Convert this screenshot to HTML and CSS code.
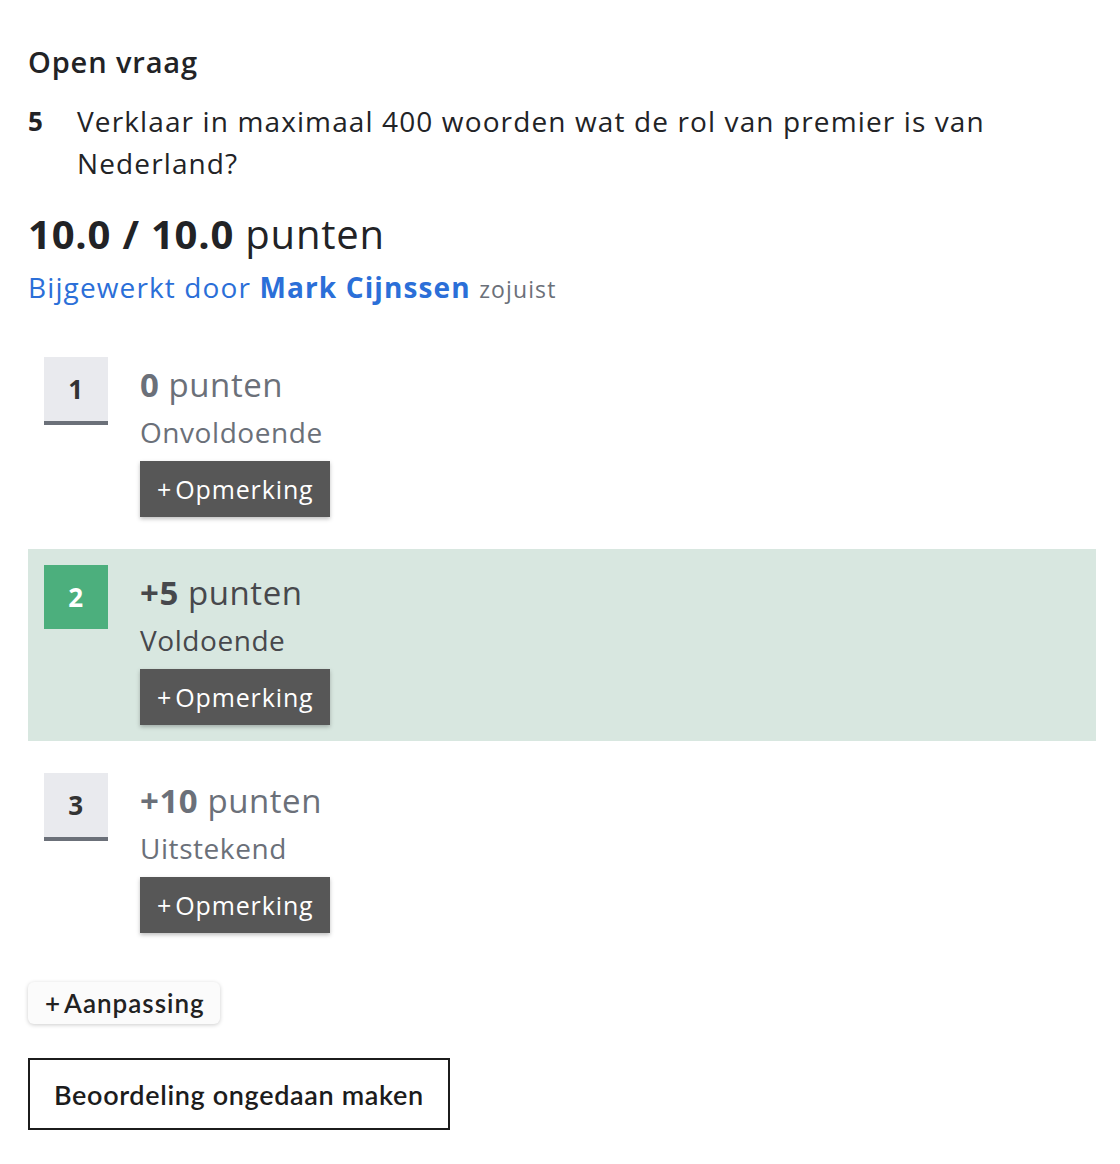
FILE: index.html
```html
<!DOCTYPE html>
<html lang="nl">
<head>
<meta charset="UTF-8">
<meta name="viewport" content="width=device-width, initial-scale=1.0">
<title>Open vraag</title>
<link rel="stylesheet" href="styles.css">
</head>
<body>
    <div class="wrapper">
        <h2 class="q-type">Open vraag</h2>
        <div class="question">
            <span class="q-num">5</span>
            <p class="q-text">Verklaar in maximaal 400 woorden wat de rol van premier is van Nederland?</p>
        </div>

        <div class="score"><b>10.0 / 10.0</b> punten</div>
        <div class="updated">Bijgewerkt door <b>Mark Cijnssen</b> <span class="when">zojuist</span></div>

        <!-- rubric -->
        <div class="rubric">
            <div class="level">
                <div class="key">1</div>
                <div class="level-body">
                    <div class="pts"><b>0</b> punten</div>
                    <div class="label">Onvoldoende</div>
                    <button class="btn-note">+<span>Opmerking</span></button>
                </div>
            </div>
            <div class="level selected">
                <div class="key">2</div>
                <div class="level-body">
                    <div class="pts"><b>+5</b> punten</div>
                    <div class="label">Voldoende</div>
                    <button class="btn-note">+<span>Opmerking</span></button>
                </div>
            </div>
            <div class="level">
                <div class="key">3</div>
                <div class="level-body">
                    <div class="pts"><b>+10</b> punten</div>
                    <div class="label">Uitstekend</div>
                    <button class="btn-note">+<span>Opmerking</span></button>
                </div>
            </div>
        </div>

        <button class="btn-adjust">+<span>Aanpassing</span></button>
        <div>
            <button class="btn-undo">Beoordeling ongedaan maken</button>
        </div>
    </div>
</body>
</html>
```

FILE: styles.css
```css
body{
    margin:0;
    background:#fff;
    font-family:"Open Sans", "DejaVu Sans", sans-serif;
    letter-spacing:0.035em;
    color:#222326;
}
.wrapper{
    padding:40px 24px 32px 28px;
}
.q-type{
    margin:0;
    font-size:29px;
    font-weight:600;
    line-height:44px;
    letter-spacing:0.03em;
}
.question{
    display:flex;
    margin-top:16px;
}
.q-num{
    width:49px;
    flex:none;
    font-size:26px;
    font-weight:700;
    line-height:42px;
}
.q-text{
    margin:0;
    max-width:960px;
    font-size:28px;
    line-height:42px;
    letter-spacing:0.04em;
}
.score{
    margin-top:24px;
    font-size:40px;
    line-height:52px;
    letter-spacing:0.02em;
}
.score b{
    font-weight:700;
}
.updated{
    margin-top:9px;
    font-size:28px;
    line-height:36px;
    color:#2b6fd8;
    letter-spacing:0.04em;
}
.updated b{
    font-weight:700;
}
.updated .when{
    font-size:23px;
    color:#6b7079;
}

/* rubric levels */
.rubric{
    margin-top:34px;
    display:flex;
    flex-direction:column;
    gap:16px;
}
.level{
    display:flex;
    gap:32px;
    padding:16px;
    color:#6b7079;
}
.level.selected{
    background:#d8e7e0;
    color:#47484c;
}
.key{
    width:64px;
    height:64px;
    flex:none;
    display:flex;
    align-items:center;
    justify-content:center;
    background:#e9eaee;
    border-bottom:4px solid #6b7079;
    color:#333;
    font-size:26px;
    font-weight:700;
}
.selected .key{
    background:#4caf7d;
    border-bottom:none;
    color:#fff;
}
.pts{
    font-size:33px;
    line-height:44px;
    margin-top:6px;
}
.pts b{
    font-weight:700;
}
.label{
    margin-top:5px;
    font-size:28px;
    line-height:40px;
}
.btn-note{
    margin-top:9px;
    height:56px;
    padding:0 16px 0 17px;
    border:none;
    background:#575757;
    color:#fff;
    font-family:inherit;
    font-size:25px;
    letter-spacing:0.035em;
    box-shadow:0 2px 4px rgba(0,0,0,0.25);
}
.btn-note span, .btn-adjust span{
    margin-left:3px;
}
.btn-adjust{
    margin-top:33px;
    height:42px;
    padding:0 15px 0 17px;
    border:none;
    border-radius:6px;
    background:#fbfbfb;
    color:#222;
    font-family:"Lato", sans-serif;
    font-size:26px;
    font-weight:600;
    letter-spacing:1px;
    box-shadow:0 1px 4px rgba(0,0,0,0.2);
}
.btn-undo{
    margin-top:34px;
    height:72px;
    padding:0 24px;
    border:2px solid #1c1c1c;
    background:#fff;
    color:#1c1c1c;
    font-family:"Lato", sans-serif;
    font-size:27px;
    font-weight:600;
    letter-spacing:0.65px;
}
```
